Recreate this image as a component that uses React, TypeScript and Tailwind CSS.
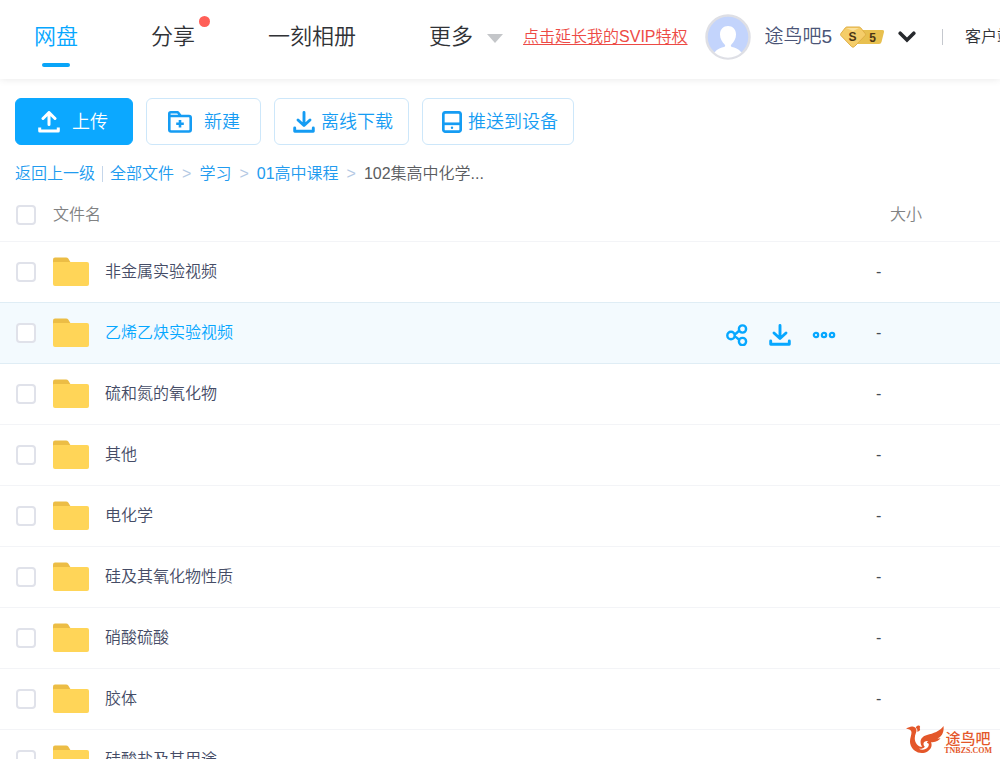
import type { ReactNode } from "react";

type FileRow = { name: string; active?: boolean };

const files: FileRow[] = [
  { name: "非金属实验视频" },
  { name: "乙烯乙炔实验视频", active: true },
  { name: "硫和氮的氧化物" },
  { name: "其他" },
  { name: "电化学" },
  { name: "硅及其氧化物性质" },
  { name: "硝酸硫酸" },
  { name: "胶体" },
  { name: "硅酸盐及其用途" },
];

function UploadIcon() {
  return (
    <svg width="22" height="22" viewBox="0 0 22 22" fill="none" stroke="currentColor" strokeWidth="3" strokeLinecap="round" strokeLinejoin="round" aria-hidden="true">
      <path d="M11 13.500V3M5 7.500l6-6 6 6" />
      <path d="M1.700 16.500v3.500h18.600v-3.500" strokeLinecap="butt" />
    </svg>
  );
}

function DownloadIcon() {
  return (
    <svg width="22" height="22" viewBox="0 0 22 22" fill="none" stroke="currentColor" strokeWidth="2.900" strokeLinecap="round" strokeLinejoin="round" aria-hidden="true">
      <path d="M11 1.500V14M5 9l6 5.500L17 9" />
      <path d="M1.700 17v3.300h18.600V17" />
    </svg>
  );
}

function NewFolderIcon() {
  return (
    <svg width="24" height="22" viewBox="0 0 24 22" fill="none" stroke="currentColor" strokeWidth="2.600" strokeLinejoin="round" aria-hidden="true">
      <path d="M1.300 18.500V2.800q0-1.500 1.500-1.500h7l3 3.700h8.200q1.700 0 1.700 1.700v12.100q0 1.700-1.700 1.700H3q-1.700 0-1.700-1.700ZM1.500 5H13" />
      <path d="M12 9v7.600M8.200 12.800h7.600" />
    </svg>
  );
}

function DeviceIcon() {
  return (
    <svg width="20" height="22" viewBox="0 0 20 22" fill="none" stroke="currentColor" strokeWidth="2.700" aria-hidden="true">
      <rect x="1.300" y="1.300" width="17.400" height="19.400" rx="2.200" />
      <path d="M1.300 12.800h17.400" />
      <circle cx="10" cy="16.800" r="1.200" fill="currentColor" stroke="none" />
    </svg>
  );
}

function ShareIcon() {
  return (
    <svg width="22" height="22" viewBox="0 0 22 22" fill="none" stroke="currentColor" strokeWidth="2.400" aria-hidden="true">
      <circle cx="5" cy="11.500" r="3.700" />
      <circle cx="16.500" cy="5" r="3.600" />
      <circle cx="16.500" cy="17.500" r="3.600" />
      <path d="M8.500 10.300C11 9.500 11.500 8 13.200 6.500M8.500 12.600c2.500.6 3 2 4.800 3.300" />
    </svg>
  );
}

function MoreIcon() {
  return (
    <svg width="24" height="8" viewBox="0 0 24 8" fill="none" stroke="currentColor" strokeWidth="2.200" aria-hidden="true">
      <circle cx="4" cy="4" r="2.200" />
      <circle cx="12" cy="4" r="2.200" />
      <circle cx="20" cy="4" r="2.200" />
    </svg>
  );
}

function FolderIcon() {
  return (
    <svg width="36" height="30" viewBox="0 0 36 30" aria-hidden="true">
      <path d="M0 8V2.500Q0 .5 2 .5h11q1.500 0 2.400 1.300L18 6v4H0Z" fill="#ecbd45" />
      <path d="M0 5.800q0-.8.800-.8H34q2 0 2 2v20q0 2-2 2H2q-2 0-2-2Z" fill="#ffd558" />
    </svg>
  );
}

function Avatar() {
  return (
    <svg width="46" height="46" viewBox="0 0 46 46" aria-hidden="true">
      <circle cx="23" cy="23" r="21.500" fill="#c3d4fc" stroke="#dedfe5" strokeWidth="2.500" />
      <path d="M9.500 38.500c3-4 7-5 9.500-5.600 1.200-.3 1.500-1.300.8-2.200C17 27.500 15 25 15 20.500 15 15 18.500 12 23 12s8 3 8 8.500c0 4.500-2 7-4.800 10.200-.7.900-.4 1.900.8 2.200 2.500.6 6.500 1.600 9.500 5.600A20.300 20.300 0 0 1 9.500 38.500Z" fill="#fff" />
    </svg>
  );
}

function SvipBadge() {
  return (
    <svg width="46" height="22" viewBox="0 0 46 22" fontFamily="Liberation Sans, sans-serif" fontWeight="700" role="img" aria-label="SVIP 5">
      <path d="M17 4h25.500q2 0 1.500 2l-2.500 10q-.5 2-2.500 2H15Z" fill="#e8c04f" />
      <path d="M7 1h12q1 0 1.700.8l4.500 5.700q.8 1 0 2L14.500 20.500q-1.500 1.500-3 0L.9 9.500q-.9-1 0-2l4.400-5.700Q6 1 7 1Z" fill="#f5cd69" stroke="#dfae45" strokeWidth="1" />
      <path d="M6 2h13l-6 3Z" fill="#fbe19c" />
      <text x="12.500" y="14.500" textAnchor="middle" fontSize="12" fill="#4b3515">S</text>
      <text x="32.500" y="15.500" textAnchor="middle" fontSize="12" fill="#4b3515">5</text>
    </svg>
  );
}

function BirdLogo() {
  return (
    <svg width="38" height="30" viewBox="0 0 38 30" fill="#e4572a" aria-hidden="true">
      <path d="M0 3.500C2.800 2.800 4 1.300 6.600 1.600c3.400.5 4.700 3.200 3.300 6.500C8.300 12 8.200 16.200 11 19.500c1.500 1.800 3.400 2.500 5.300 2.300C12.600 16.500 15 11.700 21 10c6.500-1.700 12.500-3.500 16.500-9 .8 6.500-1.800 10.500-6 12.500 1 .1 2-.1 3-.5-2 3.300-5.500 4.200-9.500 4.300 1.500 3.300.2 6.900-3.500 9.100-6.500 3.700-15.500.4-17.300-8C3.200 13.500 6.200 9.500 5.300 6.500 4.700 4.500 2.600 4 0 3.500Zm22.500 12.600c-2.700-.6-4.800.4-5 2.600-.1 1.200.4 2.200 1.300 3.100-1.400 1.700-3.800 2.400-6 1.900 4.200 2.300 9.700.3 10-3.900.1-1.200-.8-2.100-1.800-1.800 0-.9.500-1.500 1.500-1.900Z" />
      <path d="M9.800 2.800C10.500 1 11.600.2 13 .6c1.300.4 1.500 1.900.5 2.500 1.500 1.500 0 3.900-2.600 3.400 1-.9.500-2.500-1.100-3.700Z" />
    </svg>
  );
}

function ToolButton({ icon, label, className }: { icon: ReactNode; label: string; className: string }) {
  return (
    <button type="button" className={`flex h-[47px] shrink-0 items-center rounded-md border text-lg ${className}`}>
      {icon}
      <span>{label}</span>
    </button>
  );
}

function Check({ label }: { label: string }) {
  return (
    <input
      type="checkbox"
      aria-label={label}
      className="ml-4 block size-5 appearance-none rounded border-2 border-[#e0e2ea] bg-white checked:border-[#06a7ff] checked:bg-[#06a7ff]"
    />
  );
}

function NavLink({ label, children, className = "text-[#303236]" }: { label: string; children?: ReactNode; className?: string }) {
  return (
    <a href="#" className={`relative flex h-full items-center ${className}`}>
      {label}
      {children}
    </a>
  );
}

function Header() {
  return (
    <header className="flex h-[79px] items-center overflow-hidden whitespace-nowrap bg-white pb-1.5 pl-[34px]">
      <nav className="flex h-full shrink-0 items-center gap-[73px] text-[22px]">
        <NavLink label="网盘" className="text-[#06a7ff]">
          <span className="absolute bottom-1.5 left-1/2 h-1 w-7 -translate-x-1/2 rounded-full bg-[#09a5f8]" />
        </NavLink>
        <NavLink label="分享">
          <span className="absolute left-full top-4 ml-1 size-[11px] rounded-full bg-[#ff5f57]" />
        </NavLink>
        <NavLink label="一刻相册" />
        <NavLink label="更多">
          <svg width="16" height="9" viewBox="0 0 16 9" className="ml-3.5 mt-1" aria-hidden="true">
            <path d="M0 0h16L8 9Z" fill="#c4c6c9" />
          </svg>
        </NavLink>
      </nav>
      <a href="#" className="ml-5 shrink-0 text-base text-[#ed4a45] underline underline-offset-2">点击延长我的SVIP特权</a>
      <div className="ml-[17px] flex shrink-0 items-center pt-px">
        <Avatar />
        <span className="ml-3.5 text-[19px] text-[#4b5577]">途鸟吧5</span>
        <span className="ml-2">
          <SvipBadge />
        </span>
        <button type="button" aria-label="展开" className="ml-3">
          <svg width="18" height="12" viewBox="0 0 18 12" fill="none" stroke="#27292d" strokeWidth="3.600" strokeLinecap="round" aria-hidden="true">
            <path d="m2.200 2.200 6.800 6.800 6.800-6.800" />
          </svg>
        </button>
      </div>
      <span className="ml-[26px] h-4 w-px shrink-0 bg-[#c5c8ce]" />
      <a href="#" className="ml-[22px] shrink-0 text-base text-[#303236]">客户端下载</a>
    </header>
  );
}

function Breadcrumb() {
  const link = "text-[#219bef]";
  const sep = <span className="mx-2 text-[#b4c9e4]">&gt;</span>;
  return (
    <nav aria-label="路径" className="mt-[17px] flex h-6 items-center whitespace-nowrap px-[15px] text-base">
      <a href="#" className={link}>返回上一级</a>
      <span className="mx-[7px] h-4 w-px bg-[#c5d6ea]" />
      <a href="#" className={link}>全部文件</a>
      {sep}
      <a href="#" className={link}>学习</a>
      {sep}
      <a href="#" className={link}>01高中课程</a>
      {sep}
      <span className="text-[#5a5c60]">102集高中化学...</span>
    </nav>
  );
}

function rowClass(index: number) {
  if (files[index].active) return "h-[61px] border-b border-[#dfedf5] bg-[#f3fafe] text-[#06a7ff]";
  if (files[index + 1]?.active) return "h-[61px] border-b border-[#dfedf5] text-[#454c66]";
  return "h-[61px] border-b border-[#f3f4f7] text-[#454c66]";
}

function FileTable() {
  return (
    <table className="mt-[3px] w-full table-fixed border-collapse text-left text-base">
      <colgroup>
        <col className="w-[53px]" />
        <col />
        <col className="w-[150px]" />
        <col className="w-[124px]" />
      </colgroup>
      <thead>
        <tr className="h-[52px] border-b border-[#f3f4f7] text-[#818283]">
          <th className="p-0 font-[350]"><Check label="全选" /></th>
          <th className="p-0 font-[350]">文件名</th>
          <th className="p-0" />
          <th className="p-0 pl-3.5 font-[350]">大小</th>
        </tr>
      </thead>
      <tbody>
        {files.map(({ name, active }, index) => (
          <tr key={name} className={rowClass(index)}>
            <td className="p-0"><Check label={name} /></td>
            <td className="p-0">
              <a href="#" className="flex items-center gap-4">
                <FolderIcon />
                <span>{name}</span>
              </a>
            </td>
            <td className="p-0">
              {active && (
                <div className="flex items-center gap-[21px] pt-1">
                  <button type="button" aria-label="分享"><ShareIcon /></button>
                  <button type="button" aria-label="下载"><DownloadIcon /></button>
                  <button type="button" aria-label="更多"><MoreIcon /></button>
                </div>
              )}
            </td>
            <td className="p-0 text-[#454c55]">-</td>
          </tr>
        ))}
      </tbody>
    </table>
  );
}

export default function App() {
  return (
    <div className="relative h-screen overflow-hidden bg-white font-['Liberation_Sans','Noto_Sans_CJK_SC',sans-serif] font-[350]">
      <div className="shadow-[0_0_8px_rgba(0,0,0,0.1)]">
        <Header />
      </div>
      <main>
        <div className="flex gap-[13px] px-[15px] pt-[19px]">
          <ToolButton icon={<UploadIcon />} label="上传" className="gap-3 border-[#0ca8ff] bg-[#0ca8ff] pl-[22px] pr-6 text-white" />
          <ToolButton icon={<NewFolderIcon />} label="新建" className="gap-3 border-[#cde7fa] pl-[21px] pr-5 text-[#159cf3]" />
          <ToolButton icon={<DownloadIcon />} label="离线下载" className="gap-1.5 border-[#cde7fa] pl-[18px] pr-[15px] text-[#159cf3]" />
          <ToolButton icon={<DeviceIcon />} label="推送到设备" className="gap-1.5 border-[#cde7fa] pl-[19px] pr-[15px] text-[#159cf3]" />
        </div>
        <Breadcrumb />
        <FileTable />
      </main>
      <div className="absolute bottom-1 right-2 flex items-end text-[#e4572a]">
        <BirdLogo />
        <div className="flex flex-col items-center">
          <span className="text-[15px] font-medium leading-4">途鸟吧</span>
          <span className="font-['Liberation_Serif',serif] text-[8px] font-bold leading-2">TNBZS.COM</span>
        </div>
      </div>
    </div>
  );
}
